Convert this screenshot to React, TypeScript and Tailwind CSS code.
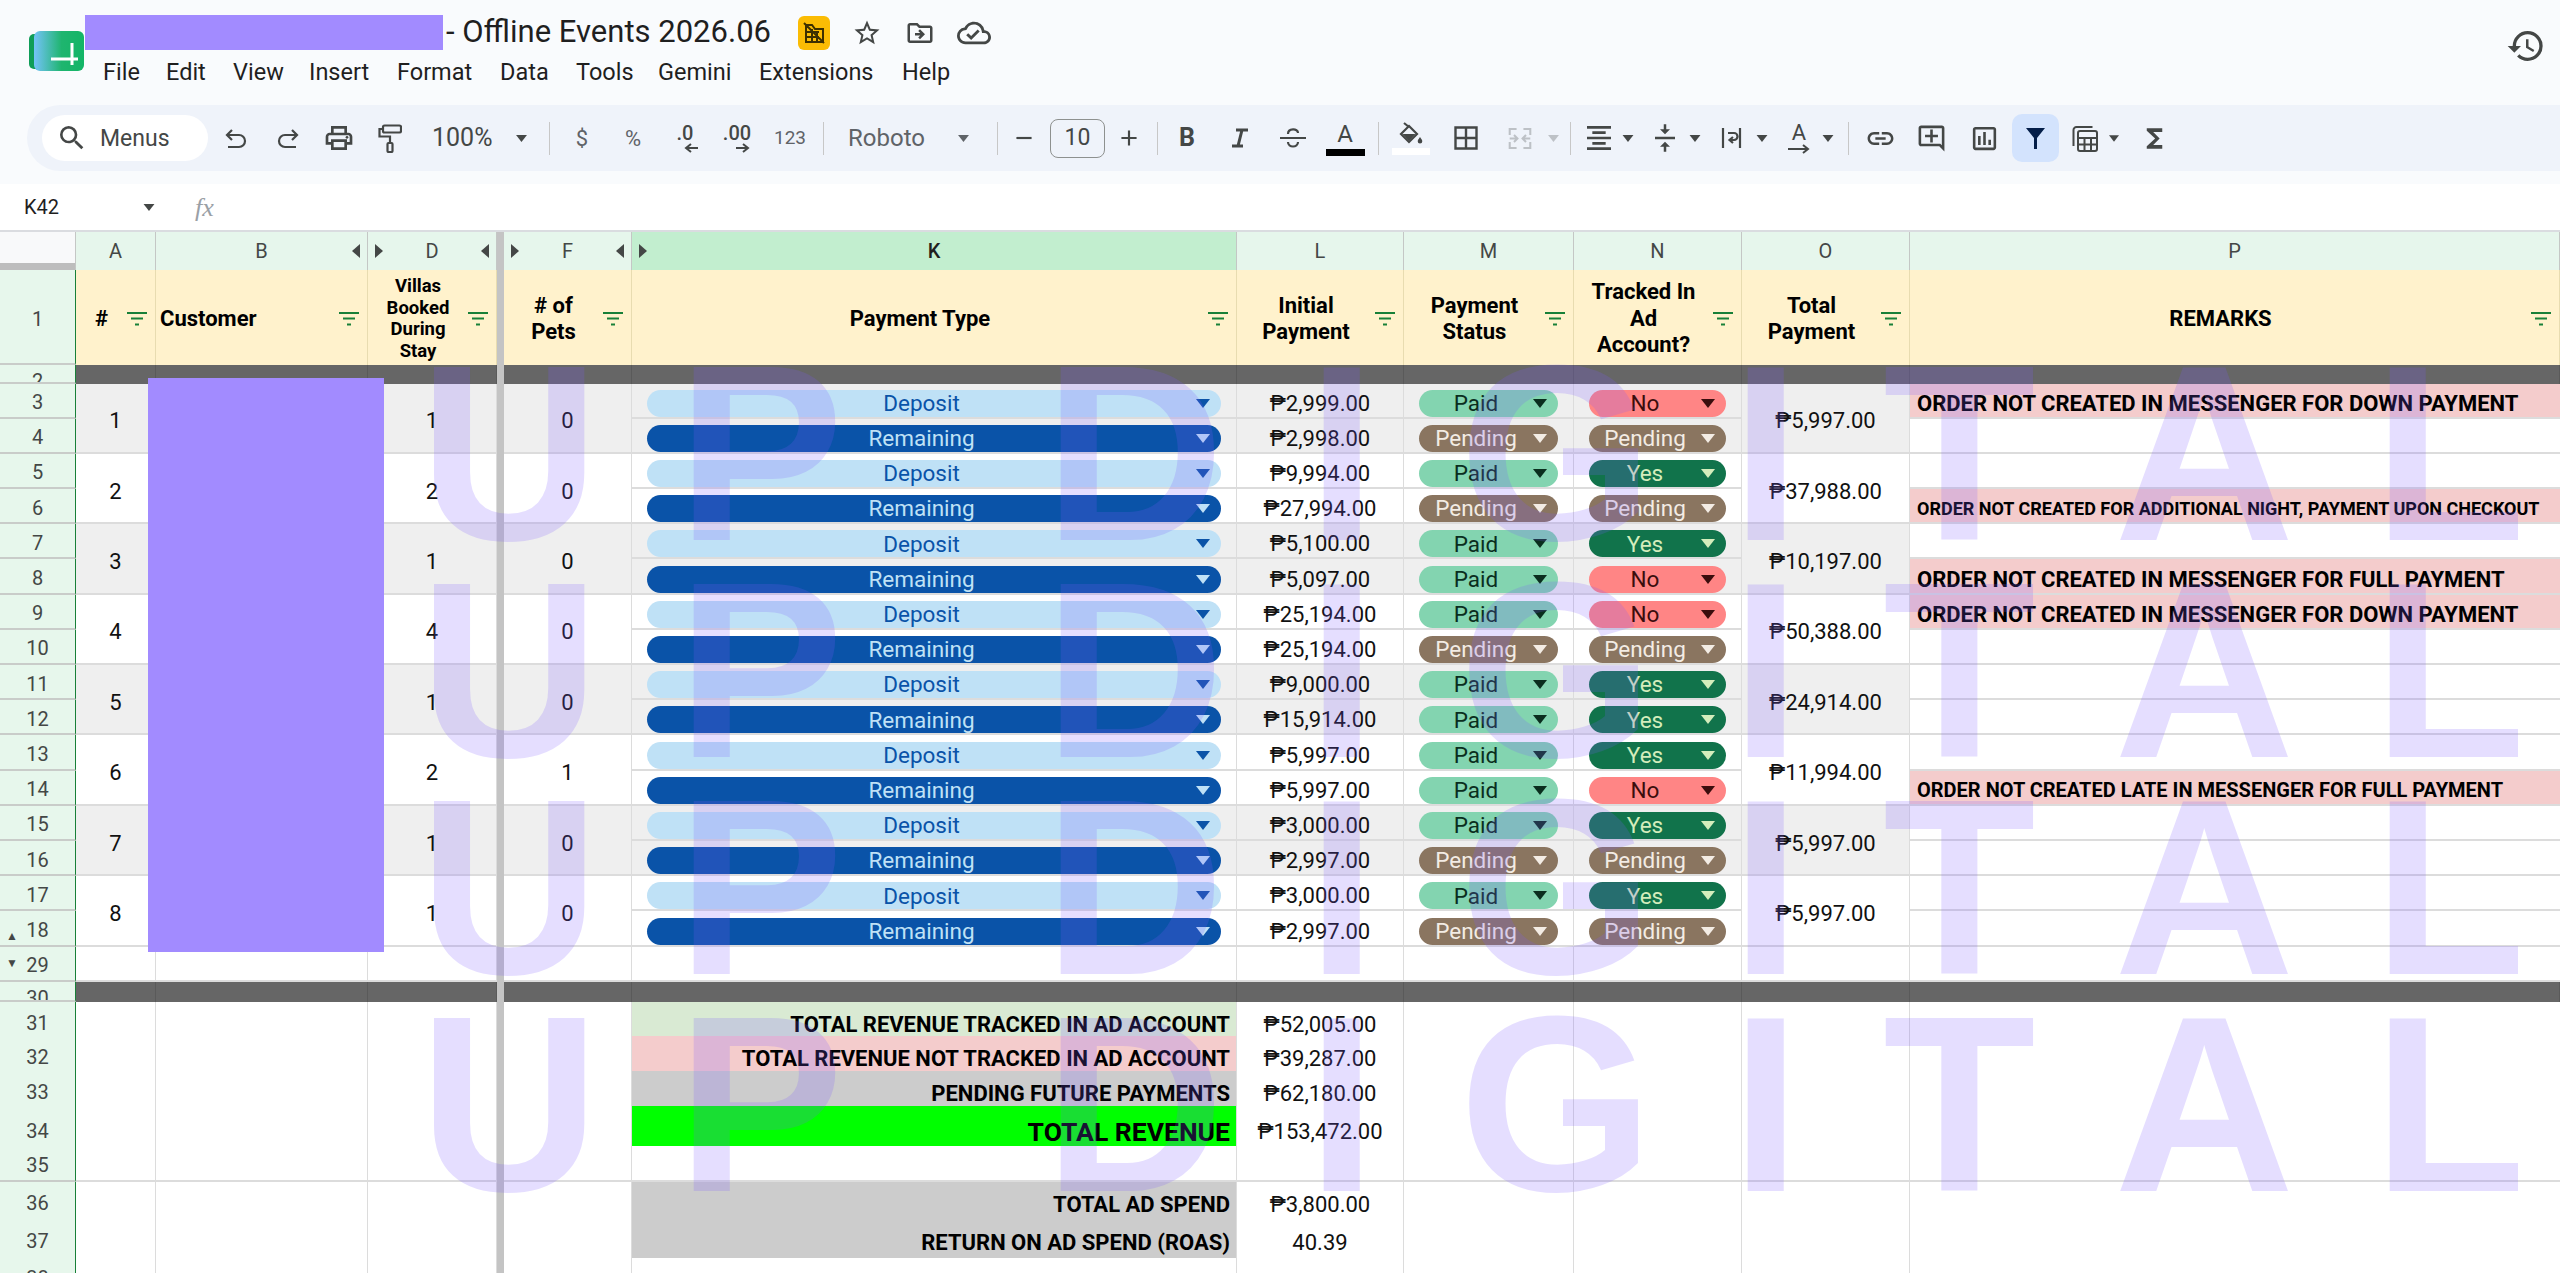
import type { ReactNode } from "react";
import {
  MdAdd,
  MdFormatAlignCenter,
  MdFunctions,
  MdHistory,
  MdLink,
  MdOutlineAddComment,
  MdOutlineCloudDone,
  MdOutlineDriveFileMove,
  MdOutlineInsertChart,
  MdOutlineLocalPrintshop,
  MdRemove,
  MdSearch,
  MdStarBorder,
  MdVerticalAlignCenter,
} from "react-icons/md";

const COLS =
  "grid grid-cols-[76px_80px_212px_129px_7px_128px_605px_167px_170px_168px_168px_650px]";

type Status = "Paid" | "Pending" | "No" | "Yes";

type Line = { amount: string; status: Status; tracked: Status; remark?: string; size?: string };

type Booking = { n: number; villas: number; pets: number; total: string; lines: [Line, Line] };

const DOWN = "ORDER NOT CREATED IN MESSENGER FOR DOWN PAYMENT";

const BOOKINGS: Booking[] = [
  {
    n: 1,
    villas: 1,
    pets: 0,
    total: "₱5,997.00",
    lines: [
      { amount: "₱2,999.00", status: "Paid", tracked: "No", remark: DOWN },
      { amount: "₱2,998.00", status: "Pending", tracked: "Pending" },
    ],
  },
  {
    n: 2,
    villas: 2,
    pets: 0,
    total: "₱37,988.00",
    lines: [
      { amount: "₱9,994.00", status: "Paid", tracked: "Yes" },
      {
        amount: "₱27,994.00",
        status: "Pending",
        tracked: "Pending",
        remark: "ORDER NOT CREATED FOR ADDITIONAL NIGHT, PAYMENT UPON CHECKOUT",
        size: "text-[18px]",
      },
    ],
  },
  {
    n: 3,
    villas: 1,
    pets: 0,
    total: "₱10,197.00",
    lines: [
      { amount: "₱5,100.00", status: "Paid", tracked: "Yes" },
      {
        amount: "₱5,097.00",
        status: "Paid",
        tracked: "No",
        remark: "ORDER NOT CREATED IN MESSENGER FOR FULL PAYMENT",
      },
    ],
  },
  {
    n: 4,
    villas: 4,
    pets: 0,
    total: "₱50,388.00",
    lines: [
      { amount: "₱25,194.00", status: "Paid", tracked: "No", remark: DOWN },
      { amount: "₱25,194.00", status: "Pending", tracked: "Pending" },
    ],
  },
  {
    n: 5,
    villas: 1,
    pets: 0,
    total: "₱24,914.00",
    lines: [
      { amount: "₱9,000.00", status: "Paid", tracked: "Yes" },
      { amount: "₱15,914.00", status: "Paid", tracked: "Yes" },
    ],
  },
  {
    n: 6,
    villas: 2,
    pets: 1,
    total: "₱11,994.00",
    lines: [
      { amount: "₱5,997.00", status: "Paid", tracked: "Yes" },
      {
        amount: "₱5,997.00",
        status: "Paid",
        tracked: "No",
        remark: "ORDER NOT CREATED LATE IN MESSENGER FOR FULL PAYMENT",
        size: "text-[20px]",
      },
    ],
  },
  {
    n: 7,
    villas: 1,
    pets: 0,
    total: "₱5,997.00",
    lines: [
      { amount: "₱3,000.00", status: "Paid", tracked: "Yes" },
      { amount: "₱2,997.00", status: "Pending", tracked: "Pending" },
    ],
  },
  {
    n: 8,
    villas: 1,
    pets: 0,
    total: "₱5,997.00",
    lines: [
      { amount: "₱3,000.00", status: "Paid", tracked: "Yes" },
      { amount: "₱2,997.00", status: "Pending", tracked: "Pending" },
    ],
  },
];

const STATUS_STYLES: Record<Status, string> = {
  Paid: "bg-[#83d4b0] text-[#0a2e1e]",
  Pending: "bg-[#8a7560] text-[#f3ece4]",
  No: "bg-[#ff8585] text-[#3b0d0d]",
  Yes: "bg-[#11734b] text-[#d4edbc]",
};

const WATERMARK_TOPS = [329, 546, 763, 980];
const WATERMARK_LETTERS: [string, number][] = [
  ["U", 419],
  ["P", 677],
  ["D", 1044],
  ["I", 1307],
  ["G", 1459],
  ["I", 1731],
  ["T", 1883],
  ["A", 2114],
  ["L", 2373],
];

function Caret({ className = "" }: { className?: string }) {
  return (
    <svg width="14" height="9" viewBox="0 0 14 9" className={className}>
      <path d="M0 0h14L7 9z" fill="currentColor" />
    </svg>
  );
}

function Sep({ className = "" }: { className?: string }) {
  return <div className={`h-[33px] w-px shrink-0 bg-[#c7c7c7] ${className}`} />;
}

function Tool({ className, children }: { className: string; children: ReactNode }) {
  return <div className={`flex h-full shrink-0 items-center justify-center ${className}`}>{children}</div>;
}

function MiniCaret({ className }: { className: string }) {
  return (
    <Tool className={className}>
      <Caret className="h-[7px] w-[13px]" />
    </Tool>
  );
}

function DecimalIcon({ label, right }: { label: string; right?: boolean }) {
  return (
    <div className="flex flex-col items-center leading-none">
      <span className="text-[20px] font-medium leading-[20px]">{label}</span>
      <svg width="14" height="10" viewBox="0 0 14 10" className="ml-3">
        {right ? (
          <path d="M0 5h11M7 1l5 4-5 4" fill="none" stroke="currentColor" strokeWidth="2" />
        ) : (
          <path d="M14 5H3M7 1L2 5l5 4" fill="none" stroke="currentColor" strokeWidth="2" />
        )}
      </svg>
    </div>
  );
}

function Toolbar() {
  const stroke = { fill: "none", stroke: "currentColor", strokeWidth: 2.2 };
  return (
    <div className="ml-[27px] flex h-[66px] items-center rounded-l-[33px] bg-[#eff3fa] text-[#444746]">
      <div className="ml-[15px] flex h-[46px] w-[166px] shrink-0 items-center rounded-full bg-white pl-[14px] text-[23px]">
        <MdSearch size={32} />
        <span className="ml-[12px] leading-none">Menus</span>
      </div>
      <Tool className="ml-[2px] w-[52px]">
        <svg width="22" height="21" viewBox="0 0 22 21" {...stroke}>
          <path d="M7 2L2 7l5 5M2 7h12a6 6 0 0 1 0 12H3" />
        </svg>
      </Tool>
      <Tool className="w-[52px]">
        <svg width="22" height="21" viewBox="0 0 22 21" {...stroke}>
          <path d="M15 2l5 5-5 5M20 7H8a6 6 0 0 0 0 12h11" />
        </svg>
      </Tool>
      <Tool className="w-[50px]">
        <MdOutlineLocalPrintshop size={32} />
      </Tool>
      <Tool className="w-[52px]">
        <svg width="24" height="29" viewBox="0 0 24 29" {...stroke}>
          <rect x="5" y="1.500" width="18" height="7" rx="1.500" />
          <path d="M5 5H1.500v7.500H12V19" />
          <rect x="9.500" y="19" width="5" height="9" rx="1" />
        </svg>
      </Tool>
      <Tool className="w-[133px] justify-start pl-[16px] text-[25px]">
        <span>100%</span>
        <Caret className="ml-[23px] h-[7px] w-[13px]" />
      </Tool>
      <Sep />
      <Tool className="ml-[6px] w-[52px] text-[22px] text-[#5f6368]">$</Tool>
      <Tool className="w-[50px] text-[22px] text-[#5f6368]">%</Tool>
      <Tool className="w-[54px]">
        <DecimalIcon label=".0" />
      </Tool>
      <Tool className="w-[50px]">
        <DecimalIcon label=".00" right />
      </Tool>
      <Tool className="w-[56px] text-[19px] text-[#5f6368]">123</Tool>
      <Sep className="ml-[5px]" />
      <Tool className="w-[173px] justify-start pl-[24px] text-[24px] text-[#5f6368]">
        <span>Roboto</span>
        <Caret className="ml-[32px] h-[7px] w-[13px]" />
      </Tool>
      <Sep />
      <Tool className="w-[52px]">
        <MdRemove size={26} />
      </Tool>
      <div className="flex h-[39px] w-[55px] shrink-0 items-center justify-center rounded-[8px] border border-[#8e918f] text-[23px]">
        10
      </div>
      <Tool className="w-[48px]">
        <MdAdd size={26} />
      </Tool>
      <Sep className="ml-[4px]" />
      <Tool className="ml-[3px] w-[52px] text-[25px] font-bold">B</Tool>
      <Tool className="w-[54px]">
        <svg width="18" height="20" viewBox="0 0 18 20" fill="none" stroke="currentColor" strokeWidth="3">
          <path d="M5 2h12M11 2L7 18M1 18h11" />
        </svg>
      </Tool>
      <Tool className="w-[52px]">
        <svg width="28" height="24" viewBox="0 0 28 24" fill="none" stroke="currentColor" strokeWidth="2.200">
          <path d="M1 12h26M9 8c0-6 10-6 10-1M9 16c0 6 10 6 10 0" />
        </svg>
      </Tool>
      <Tool className="w-[52px]">
        <div className="flex flex-col items-center">
          <span className="text-[24px] leading-[26px]">A</span>
          <span className="mt-[2px] h-[7px] w-[39px] bg-black" />
        </div>
      </Tool>
      <Sep className="ml-[7px]" />
      <Tool className="ml-[6px] w-[52px]">
        <div className="flex flex-col items-center">
          <svg width="24" height="24" viewBox="0 0 24 24" fill="none" stroke="currentColor" strokeWidth="2.200">
            <path d="M5 1l5 4M10 4l8 8-8 8-8-8z" />
            <path d="M3.500 12h13L10 19z" fill="currentColor" stroke="none" />
            <path
              d="M21 15c-1.500 2.300-2.300 3.100-2.300 4.300a2.300 2.300 0 0 0 4.600 0c0-1.200-.8-2-2.300-4.300z"
              fill="currentColor"
              stroke="none"
            />
          </svg>
          <span className="mt-[2px] h-[7px] w-[38px] bg-white" />
        </div>
      </Tool>
      <Tool className="w-[58px]">
        <svg width="24" height="24" viewBox="0 0 24 24" fill="none" stroke="currentColor" strokeWidth="2.400">
          <path d="M1.500 1.500h21v21h-21zM12 1.500v21M1.500 12h21" />
        </svg>
      </Tool>
      <Tool className="w-[50px] text-[#bdc1c6]">
        <svg width="24" height="25" viewBox="0 0 28 28" fill="none" stroke="currentColor" strokeWidth="2.400">
          <path d="M2 10V3h8M18 3h8v7M2 18v7h8M18 25h8v-7M2 14h8M7 10l4 4-4 4M26 14h-8M21 10l-4 4 4 4" />
        </svg>
      </Tool>
      <Tool className="w-[16px] text-[#bdc1c6]">
        <Caret className="h-[7px] w-[13px]" />
      </Tool>
      <Sep className="ml-[9px]" />
      <Tool className="ml-[5px] w-[46px]">
        <MdFormatAlignCenter size={32} />
      </Tool>
      <MiniCaret className="w-[12px]" />
      <Tool className="ml-[7px] w-[48px]">
        <MdVerticalAlignCenter size={30} />
      </Tool>
      <MiniCaret className="w-[12px]" />
      <Tool className="ml-[7px] w-[48px]">
        <svg width="22" height="22" viewBox="0 0 22 22" {...stroke}>
          <path d="M2 1v20M19 1v20M7 6h6a3.500 3.500 0 0 1 0 7H9M12 10l-3.500 3 3.500 3" />
        </svg>
      </Tool>
      <MiniCaret className="w-[12px]" />
      <Tool className="ml-[8px] w-[46px]">
        <div className="flex flex-col items-center">
          <span className="text-[22px] leading-[20px]">A</span>
          <svg width="24" height="10" viewBox="0 0 24 10" className="mt-[1px]">
            <path d="M1 5h19M16 1l5 4-5 4" fill="none" stroke="currentColor" strokeWidth="2" />
          </svg>
        </div>
      </Tool>
      <MiniCaret className="w-[12px]" />
      <Sep className="ml-[14px]" />
      <Tool className="ml-[5px] w-[52px]">
        <MdLink size={31} />
      </Tool>
      <Tool className="w-[50px]">
        <MdOutlineAddComment size={31} />
      </Tool>
      <Tool className="w-[56px]">
        <MdOutlineInsertChart size={31} />
      </Tool>
      <div className="flex h-[48px] w-[47px] shrink-0 items-center justify-center rounded-[10px] bg-[#d3e3fd] text-[#041e49]">
        <svg width="19" height="21" viewBox="0 0 19 21" fill="currentColor">
          <path d="M0 0h19l-8 10v11H8V10z" />
        </svg>
      </div>
      <Tool className="ml-[2px] w-[48px]">
        <svg width="27" height="27" viewBox="0 0 27 27" fill="none" stroke="currentColor" strokeWidth="2">
          <path d="M1.500 21V5a3 3 0 0 1 3-3h16" />
          <rect x="6" y="6" width="19" height="20" rx="2" />
          <path d="M6 13h19M6 19.500h19M12.500 13v13M19 13v13" />
        </svg>
      </Tool>
      <MiniCaret className="w-[10px]" />
      <Tool className="w-[70px]">
        <MdFunctions size={31} />
      </Tool>
    </div>
  );
}

function TopBar() {
  return (
    <div className="relative h-[184px] bg-[#f9fbfd]">
      <div className="flex h-[105px] pl-[29px]">
        <svg width="55" height="40" viewBox="0 0 55 40" className="mt-[31px] shrink-0">
          <defs>
            <linearGradient id="logoFill" x1="0" x2="1" y1="0" y2="0">
              <stop offset="0" stopColor="#74c3f9" />
              <stop offset="0.55" stopColor="#1fb56f" />
              <stop offset="1" stopColor="#13b566" />
            </linearGradient>
          </defs>
          <rect y="3" width="20" height="35" rx="5" fill="#0f9d58" />
          <rect x="5" width="50" height="40" rx="6" fill="url(#logoFill)" />
          <path d="M22 28h27M43 12v22" stroke="#fff" strokeWidth="3" fill="none" />
        </svg>
        <div className="ml-[1px] flex min-w-0 flex-col">
          <div className="mt-[15px] flex h-[35px] items-center">
            <div className="h-[35px] w-[358px] shrink-0 bg-[#a28bff]" />
            <span className="ml-[3px] w-[325px] shrink-0 whitespace-nowrap text-[31px] text-[#1f1f1f]">
              - Offline Events 2026.06
            </span>
            <div className="ml-[27px] flex h-[34px] w-[32px] shrink-0 items-center justify-center rounded-[6px] bg-[#fbbc04]">
              <svg width="24" height="24" viewBox="0 0 24 24" fill="none" stroke="#3d3000" strokeWidth="2">
                <path d="M2 2l20 20M4 4v17h17V8h-8L10 4zM4 11h13M4 16h13M10 8v13M15 12v9" />
              </svg>
            </div>
            <MdStarBorder size={30} className="ml-[22px] shrink-0 text-[#444746]" />
            <MdOutlineDriveFileMove size={30} className="ml-[23px] shrink-0 text-[#444746]" />
            <MdOutlineCloudDone size={34} className="ml-[22px] shrink-0 text-[#444746]" />
          </div>
          <div className="mt-[9px] flex pl-[18px] text-[23.500px] leading-[26px] text-[#1f1f1f]">
            <span className="w-[63px]">File</span>
            <span className="w-[67px]">Edit</span>
            <span className="w-[76px]">View</span>
            <span className="w-[88px]">Insert</span>
            <span className="w-[103px]">Format</span>
            <span className="w-[76px]">Data</span>
            <span className="w-[82px]">Tools</span>
            <span className="w-[101px]">Gemini</span>
            <span className="w-[143px]">Extensions</span>
            <span>Help</span>
          </div>
        </div>
        <MdHistory size={40} className="absolute right-[14px] top-[26px] text-[#444746]" />
      </div>
      <Toolbar />
    </div>
  );
}

function FormulaBar() {
  return (
    <div className="flex h-[48px] items-center border-b-2 border-[#dadce0] bg-white text-[#1f1f1f]">
      <span className="ml-[24px] w-[119px] text-[20px]">K42</span>
      <Caret className="h-[7px] w-[12px] text-[#444746]" />
      <span className="ml-[40px] font-['Liberation_Serif',serif] text-[26px] italic text-[#9aa0a6]">fx</span>
    </div>
  );
}

function Tri({ dir }: { dir: "left" | "right" }) {
  return (
    <svg width="8" height="14" viewBox="0 0 8 14" className="shrink-0 text-[#444746]">
      <path d={dir === "left" ? "M8 0v14L0 7z" : "M0 0v14l8-7z"} fill="currentColor" />
    </svg>
  );
}

function ColumnHead({
  label,
  left,
  right,
  active,
}: {
  label: string;
  left?: boolean;
  right?: boolean;
  active?: boolean;
}) {
  return (
    <div
      className={`flex items-center justify-between border-r border-[#c4c7c5] px-[7px] text-[20px] ${
        active ? "bg-[#c2eecf] font-medium text-[#1f1f1f]" : "bg-[#e6f6ec] text-[#444746]"
      }`}
    >
      <span className="w-[8px]">{left && <Tri dir="right" />}</span>
      <span>{label}</span>
      <span className="w-[8px]">{right && <Tri dir="left" />}</span>
    </div>
  );
}

function FilterMark() {
  return (
    <svg width="20" height="14" viewBox="0 0 20 14" className="mr-[8px] shrink-0 text-[#188038]">
      <path d="M0 1h20M4 6.500h12M8 12.500h4" stroke="currentColor" strokeWidth="2" fill="none" />
    </svg>
  );
}

function FieldHead({
  children,
  size = "text-[22px] leading-[26.500px]",
  align = "text-center",
}: {
  children: ReactNode;
  size?: string;
  align?: string;
}) {
  return (
    <div className="flex items-center border-r border-[#e8dcb0] bg-[#fff2cc] pt-[3px] font-bold text-black">
      <div className={`min-w-0 flex-1 px-[4px] ${align} ${size}`}>{children}</div>
      <FilterMark />
    </div>
  );
}

function RowHead({ n, children }: { n: number | string; children?: ReactNode }) {
  return (
    <div className="relative flex items-center justify-center overflow-hidden border-b-2 border-r border-b-[#c9ccc9] border-r-[#188038] bg-[#e7f7ec] pt-[4px] text-[20px] text-[#444746]">
      {children}
      {n}
    </div>
  );
}

function FreezeBar() {
  return <div className="bg-[#c4c4c4]" />;
}

function Chip({ label, className }: { label: string; className: string }) {
  return (
    <div className={`mx-[15px] flex h-[27px] flex-1 items-center rounded-full pr-[11px] ${className}`}>
      <span className="flex-1 text-center text-[22.500px] leading-none">{label}</span>
      <Caret className="h-[9px] w-[14px]" />
    </div>
  );
}

function Cell({ bg, children, className = "" }: { bg: string; children?: ReactNode; className?: string }) {
  return (
    <div
      className={`flex items-center justify-center border-b-2 border-r border-b-[#dcdcdc] border-r-[#dcdcdc] pt-[6px] text-[22px] text-[#111] ${bg} ${className}`}
    >
      {children}
    </div>
  );
}

function BookingRows({ booking, first }: { booking: Booking; first: number }) {
  const bg = booking.n % 2 === 1 ? "bg-[#efefef]" : "bg-white";
  const cells = (line: Line, kind: "Deposit" | "Remaining") => (
    <>
      <Cell bg={bg}>
        <Chip
          label={kind}
          className={kind === "Deposit" ? "bg-[#bfe1f6] text-[#0a53a8]" : "bg-[#0a53a8] text-[#bfe1f6]"}
        />
      </Cell>
      <Cell bg={bg}>{line.amount}</Cell>
      <Cell bg={bg}>
        <Chip label={line.status} className={STATUS_STYLES[line.status]} />
      </Cell>
      <Cell bg={bg}>
        <Chip label={line.tracked} className={STATUS_STYLES[line.tracked]} />
      </Cell>
    </>
  );
  const remark = (line: Line) => (
    <div
      className={`flex items-center overflow-hidden whitespace-nowrap border-b-2 border-b-[#dcdcdc] pl-[7px] pt-[6px] font-bold text-black ${
        line.remark ? "bg-[#f4cccc]" : "bg-white"
      } ${line.size ?? "text-[22px]"}`}
    >
      {line.remark}
    </div>
  );
  return (
    <div className={`${COLS} h-[70.4px] grid-rows-2`}>
      <RowHead n={first} />
      <Cell bg={bg} className="row-span-2">
        {booking.n}
      </Cell>
      <Cell bg={bg} className="row-span-2" />
      <Cell bg={bg} className="row-span-2">
        {booking.villas}
      </Cell>
      <div className="row-span-2 bg-[#c4c4c4]" />
      <Cell bg={bg} className="row-span-2">
        {booking.pets}
      </Cell>
      {cells(booking.lines[0], "Deposit")}
      <Cell bg={bg} className="row-span-2">
        {booking.total}
      </Cell>
      {remark(booking.lines[0])}
      <RowHead n={first + 1}>
        {booking.n === 8 && <span className="absolute left-[6px] top-[19px] text-[12px] leading-none">▲</span>}
      </RowHead>
      {cells(booking.lines[1], "Remaining")}
      {remark(booking.lines[1])}
    </div>
  );
}

function DarkRow({ n, height }: { n: number; height: string }) {
  return (
    <div className={`${COLS} ${height}`}>
      <div className="overflow-hidden border-b-2 border-r border-b-[#c9ccc9] border-r-[#188038] bg-[#e7f7ec] pt-[4px] text-center text-[20px] leading-[24px] text-[#444746]">
        {n}
      </div>
      {Array.from({ length: 3 }, (_, i) => (
        <div key={i} className="border-r border-[#5a5a5a] bg-[#666666]" />
      ))}
      <FreezeBar />
      {Array.from({ length: 7 }, (_, i) => (
        <div key={i} className="border-r border-[#5a5a5a] bg-[#666666]" />
      ))}
    </div>
  );
}

function SummaryRow({
  n,
  height,
  label,
  value,
  bg = "bg-white",
  big,
  children,
}: {
  n: number;
  height: string;
  label?: string;
  value?: string;
  bg?: string;
  big?: boolean;
  children?: ReactNode;
}) {
  return (
    <div className={`${COLS} ${height}`}>
      <RowHead n={n}>{children}</RowHead>
      <Cell bg="bg-white" />
      <Cell bg="bg-white" />
      <Cell bg="bg-white" />
      <FreezeBar />
      <Cell bg="bg-white" />
      <div
        className={`flex items-center justify-end border-b-2 border-r border-b-[#dcdcdc] border-r-[#dcdcdc] pr-[6px] pt-[6px] font-bold text-black ${bg} ${
          big ? "text-[26.500px]" : "text-[22px]"
        }`}
      >
        {label}
      </div>
      <Cell bg="bg-white">{value}</Cell>
      <Cell bg="bg-white" />
      <Cell bg="bg-white" />
      <Cell bg="bg-white" />
      <div className="border-b-2 border-b-[#dcdcdc] bg-white" />
    </div>
  );
}

function Sheet() {
  return (
    <div>
      <div className={`${COLS} h-[38px]`}>
        <div className="flex flex-col justify-end border-r border-[#c4c7c5] bg-[#f8f9fa]">
          <div className="h-[7px] bg-[#bdbdbd]" />
        </div>
        <ColumnHead label="A" />
        <ColumnHead label="B" right />
        <ColumnHead label="D" left right />
        <FreezeBar />
        <ColumnHead label="F" left right />
        <ColumnHead label="K" left active />
        <ColumnHead label="L" />
        <ColumnHead label="M" />
        <ColumnHead label="N" />
        <ColumnHead label="O" />
        <ColumnHead label="P" />
      </div>
      <div className={`${COLS} h-[95px]`}>
        <RowHead n={1} />
        <FieldHead>#</FieldHead>
        <FieldHead align="text-left">Customer</FieldHead>
        <FieldHead size="text-[18.500px] leading-[21.500px]">Villas Booked During Stay</FieldHead>
        <FreezeBar />
        <FieldHead>
          # of
          <br />
          Pets
        </FieldHead>
        <FieldHead>Payment Type</FieldHead>
        <FieldHead>
          Initial
          <br />
          Payment
        </FieldHead>
        <FieldHead>
          Payment
          <br />
          Status
        </FieldHead>
        <FieldHead>
          Tracked In
          <br />
          Ad
          <br />
          Account?
        </FieldHead>
        <FieldHead>
          Total
          <br />
          Payment
        </FieldHead>
        <FieldHead>REMARKS</FieldHead>
      </div>
      <DarkRow n={2} height="h-[18.500px]" />
      {BOOKINGS.map((booking, index) => (
        <BookingRows key={booking.n} booking={booking} first={3 + index * 2} />
      ))}
      <SummaryRow n={29} height="h-[35.300px]">
        <span className="absolute left-[6px] top-[10px] text-[12px] leading-none">▼</span>
      </SummaryRow>
      <DarkRow n={30} height="h-[20px]" />
      <SummaryRow
        n={31}
        height="h-[34px]"
        bg="bg-[#d9ead3]"
        label="TOTAL REVENUE TRACKED IN AD ACCOUNT"
        value="₱52,005.00"
      />
      <SummaryRow
        n={32}
        height="h-[35px]"
        bg="bg-[#f4cccc]"
        label="TOTAL REVENUE NOT TRACKED IN AD ACCOUNT"
        value="₱39,287.00"
      />
      <SummaryRow n={33} height="h-[35px]" bg="bg-[#cccccc]" label="PENDING FUTURE PAYMENTS" value="₱62,180.00" />
      <SummaryRow n={34} height="h-[40px]" bg="bg-[#00ff00]" label="TOTAL REVENUE" value="₱153,472.00" big />
      <SummaryRow n={35} height="h-[36px]" />
      <SummaryRow n={36} height="h-[38px]" bg="bg-[#cccccc]" label="TOTAL AD SPEND" value="₱3,800.00" />
      <SummaryRow n={37} height="h-[38px]" bg="bg-[#cccccc]" label="RETURN ON AD SPEND (ROAS)" value="40.39" />
      <SummaryRow n={38} height="h-[38px]" />
    </div>
  );
}

function Watermark() {
  return (
    <div className="pointer-events-none absolute inset-0 overflow-hidden font-['Liberation_Sans',sans-serif] text-[250px] font-bold leading-none text-[#7c5cff]/20">
      {WATERMARK_TOPS.flatMap((top) =>
        WATERMARK_LETTERS.map(([letter, left]) => (
          <span key={`${top}-${left}`} className="absolute" style={{ top, left }}>
            {letter}
          </span>
        )),
      )}
    </div>
  );
}

export default function App() {
  return (
    <div className="relative h-[1273px] overflow-hidden bg-white font-['Roboto',sans-serif]">
      <TopBar />
      <FormulaBar />
      <Sheet />
      <div className="absolute left-[148px] top-[378px] h-[574px] w-[236px] bg-[#a28bff]" />
      <Watermark />
    </div>
  );
}
